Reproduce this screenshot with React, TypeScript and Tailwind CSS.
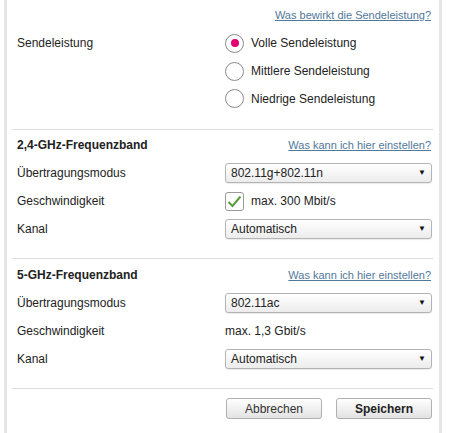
import React from "react";

const Row = ({ label, children }: { label: string; children?: React.ReactNode }) => (
  <div className="flex h-[28px] items-center">
    <div className="w-[218px] pl-[10px]">{label}</div>
    <div className="flex w-[207px] items-center">{children}</div>
  </div>
);

const Select = ({ value }: { value: string }) => (
  <div className="flex h-[20px] w-[207px] items-center justify-between rounded-[3px] border border-[#b4b4b4] bg-gradient-to-b from-white to-[#ececec] pl-[5px] pr-[5px] shadow-[0_1px_1px_rgba(0,0,0,0.08)]">
    <span>{value}</span>
    <span className="text-[8px] leading-none text-[#111]">▼</span>
  </div>
);

const Link = ({ text }: { text: string }) => (
  <span className="text-[11px] text-[#52789a] underline decoration-[#52789a]">{text}</span>
);

const Radio = ({ checked, label }: { checked?: boolean; label: string }) => (
  <div className="flex items-center">
    <div className="flex h-[19px] w-[19px] items-center justify-center rounded-full border border-[#8a8a8a] bg-white">
      {checked && <div className="h-[8px] w-[8px] rounded-full bg-[#e20074]" />}
    </div>
    <span className="ml-[7px]">{label}</span>
  </div>
);

const Sep = () => <div className="ml-[5px] mr-[6px] h-px bg-[#dcdcdc]" />;

const Header = ({ title }: { title: string }) => (
  <div className="flex h-[28px] items-center justify-between pr-[8px]">
    <span className="pl-[10px] font-bold">{title}</span>
    <Link text="Was kann ich hier einstellen?" />
  </div>
);

export default function App() {
  return (
    <div
      className="h-[433px] w-[450px] overflow-hidden bg-white text-[12px] text-[#222]"
      style={{ fontFamily: '"Liberation Sans", Arial, sans-serif' }}
    >
      <div className="ml-[4px] h-[433px] w-[438px] border-x-[3px] border-[#e6e6e6]">
        <div className="pt-[5px]">
          <div className="flex h-[20px] items-center justify-end pr-[8px]">
            <Link text="Was bewirkt die Sendeleistung?" />
          </div>
          <div className="mt-[4px] flex">
            <div className="flex h-[28px] w-[218px] items-center pl-[10px]">Sendeleistung</div>
            <div className="flex flex-col">
              <div className="flex h-[28px] items-center"><Radio checked label="Volle Sendeleistung" /></div>
              <div className="flex h-[28px] items-center"><Radio label="Mittlere Sendeleistung" /></div>
              <div className="flex h-[27px] items-center"><Radio label="Niedrige Sendeleistung" /></div>
            </div>
          </div>
        </div>
        <div className="mt-[17px]"><Sep /></div>
        <div className="pt-[1px]">
          <Header title="2,4-GHz-Frequenzband" />
          <Row label="Übertragungsmodus"><Select value="802.11g+802.11n" /></Row>
          <Row label="Geschwindigkeit">
            <div className="flex h-[19px] w-[19px] items-center justify-center rounded-[3px] border border-[#9a9a9a] bg-white">
              <svg width="15" height="13" viewBox="0 0 15 13">
                <path d="M1.5 7 L5.5 11 L13.5 1.5" fill="none" stroke="#5b9a3c" strokeWidth="2" />
              </svg>
            </div>
            <span className="ml-[7px]">max. 300 Mbit/s</span>
          </Row>
          <Row label="Kanal"><Select value="Automatisch" /></Row>
        </div>
        <div className="mt-[15px]"><Sep /></div>
        <div className="pt-[2px]">
          <Header title="5-GHz-Frequenzband" />
          <Row label="Übertragungsmodus"><Select value="802.11ac" /></Row>
          <Row label="Geschwindigkeit"><span>max. 1,3 Gbit/s</span></Row>
          <Row label="Kanal"><Select value="Automatisch" /></Row>
        </div>
        <div className="mt-[15px]"><Sep /></div>
        <div className="mt-[9px] flex justify-end gap-[14px] pr-[7px]">
          <button className="h-[21px] w-[96px] rounded-[3px] border border-[#b0b0b0] bg-gradient-to-b from-white to-[#e2e2e2] text-[12px] text-[#333]">
            Abbrechen
          </button>
          <button className="h-[21px] w-[96px] rounded-[3px] border border-[#b0b0b0] bg-gradient-to-b from-white to-[#e2e2e2] text-[12px] font-bold text-[#222]">
            Speichern
          </button>
        </div>
      </div>
    </div>
  );
}
